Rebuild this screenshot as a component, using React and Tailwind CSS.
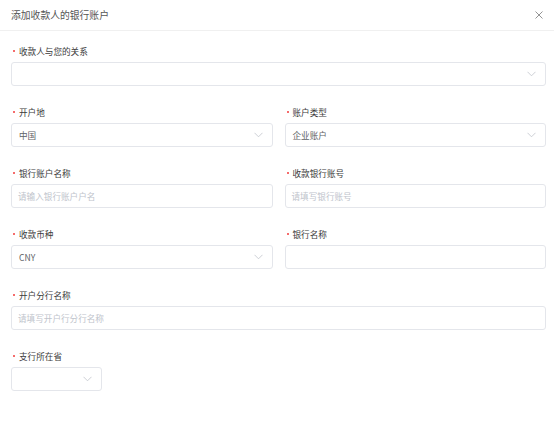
import React from "react";

const Chevron = () => (
  <svg width="9" height="6" viewBox="0 0 9 6" className="text-[#c0c4cc]">
    <path d="M0.5 0.8 L4.5 4.8 L8.5 0.8" fill="none" stroke="currentColor" strokeWidth="0.8" />
  </svg>
);

const Label = ({ children }) => (
  <div className="h-4 flex items-center text-[8.6px] text-[#3a3a3a]">
    <span className="ml-[2px] mr-[4px] w-[2px] h-[2px] bg-[#f56c6c]" />
    {children}
  </div>
);

const Select = ({ value, className = "" }) => (
  <div
    className={
      "h-6 border border-[#e4e6eb] rounded-[3px] flex items-center justify-between pl-[7px] pr-[9px] text-[8.6px] text-[#606266] " +
      className
    }
  >
    <span>{value}</span>
    <Chevron />
  </div>
);

const Input = ({ placeholder }) => (
  <div className="h-6 border border-[#e4e6eb] rounded-[3px] flex items-center px-[6px] text-[8.6px] text-[#c0c4cc]">
    {placeholder}
  </div>
);

const Field = ({ label, children }) => (
  <div className="mb-[18px]">
    <Label>{label}</Label>
    <div className="mt-[3px]">{children}</div>
  </div>
);

export default function App() {
  return (
    <div
      className="w-[554px] h-[421px] bg-white"
      style={{ fontFamily: '"Noto Sans CJK SC", "Noto Sans", sans-serif' }}
    >
      <div className="h-[31px] border-b border-[#f0f0f0] flex items-center justify-between pl-[11px] pr-[8px]">
        <span className="text-[9.8px] text-[#555]">添加收款人的银行账户</span>
        <svg width="8" height="8" viewBox="0 0 8 8" className="text-[#888] mr-[3px]">
          <path d="M0.5 0.5 L7.5 7.5 M7.5 0.5 L0.5 7.5" stroke="currentColor" strokeWidth="0.9" />
        </svg>
      </div>
      <div className="pt-[12px] pl-[11px] pr-[8px]">
        <Field label="收款人与您的关系">
          <Select value="" />
        </Field>
        <div className="grid grid-cols-2 gap-x-[12px]">
          <Field label="开户地">
            <Select value="中国" />
          </Field>
          <Field label="账户类型">
            <Select value="企业账户" />
          </Field>
          <Field label="银行账户名称">
            <Input placeholder="请输入银行账户户名" />
          </Field>
          <Field label="收款银行账号">
            <Input placeholder="请填写银行账号" />
          </Field>
          <Field label="收款币种">
            <Select value="CNY" />
          </Field>
          <Field label="银行名称">
            <Input placeholder="" />
          </Field>
        </div>
        <Field label="开户分行名称">
          <Input placeholder="请填写开户行分行名称" />
        </Field>
        <Field label="支行所在省">
          <Select value="" className="w-[91px]" />
        </Field>
      </div>
    </div>
  );
}
